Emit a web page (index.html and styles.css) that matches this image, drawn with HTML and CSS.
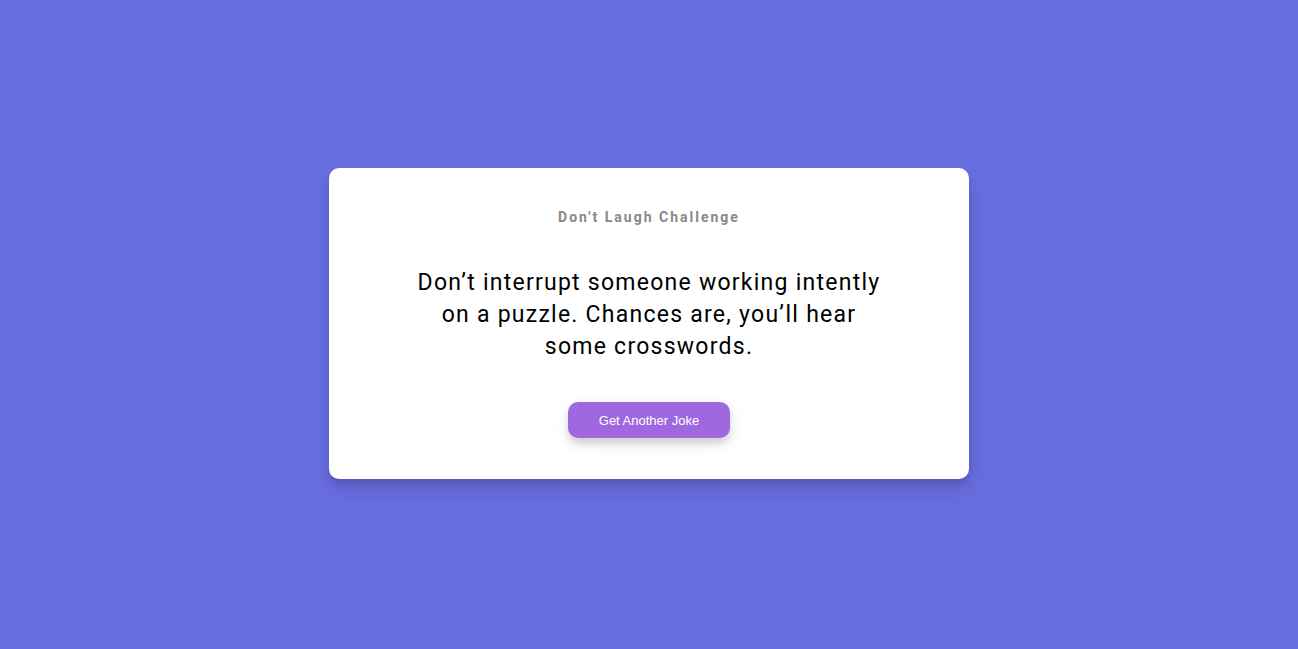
FILE: index.html
```html
<!DOCTYPE html>
<html>
<head>
<meta charset="utf-8">
<title>Don't Laugh Challenge</title>
<link rel="stylesheet" href="styles.css">
</head>
<body>
  <div class="container">
    <h3 class="title">Don't Laugh Challenge</h3>
    <div class="joke">Don’t interrupt someone working intently on a puzzle. Chances are, you’ll hear some crosswords.</div>
    <button class="btn">Get Another Joke</button>
  </div>
</body>
</html>
```
FILE: styles.css
```css
* { box-sizing: border-box; }
html, body { margin: 0; padding: 0; }
body {
  background: #686de0;
  font-family: Roboto, "Liberation Sans", sans-serif;
  display: flex;
  align-items: center;
  justify-content: center;
  height: 100vh;
  padding-bottom: 2px;
  overflow: hidden;
}
.container {
  background: #fff;
  width: 640px;
  border-radius: 10px;
  box-shadow: 0 10px 20px rgba(0,0,0,0.1), 0 6px 6px rgba(0,0,0,0.1);
  padding: 39px 20px 41px;
  text-align: center;
}
.title {
  margin: 0;
  font-size: 14px;
  line-height: 20px;
  font-weight: 700;
  letter-spacing: 2px;
  color: #888;
}
.joke {
  margin: 40px auto 39px;
  max-width: 470px;
  font-size: 23px;
  line-height: 32px;
  letter-spacing: 1.25px;
  color: #000;
}
.btn {
  background: #9f68e0;
  color: #fff;
  border: 0;
  border-radius: 10px;
  width: 162px;
  height: 36px;
  font-family: "Liberation Sans", Arial, sans-serif;
  font-size: 13px;
  box-shadow: 0 5px 15px rgba(0,0,0,0.1), 0 6px 6px rgba(0,0,0,0.1);
  cursor: pointer;
}
```
